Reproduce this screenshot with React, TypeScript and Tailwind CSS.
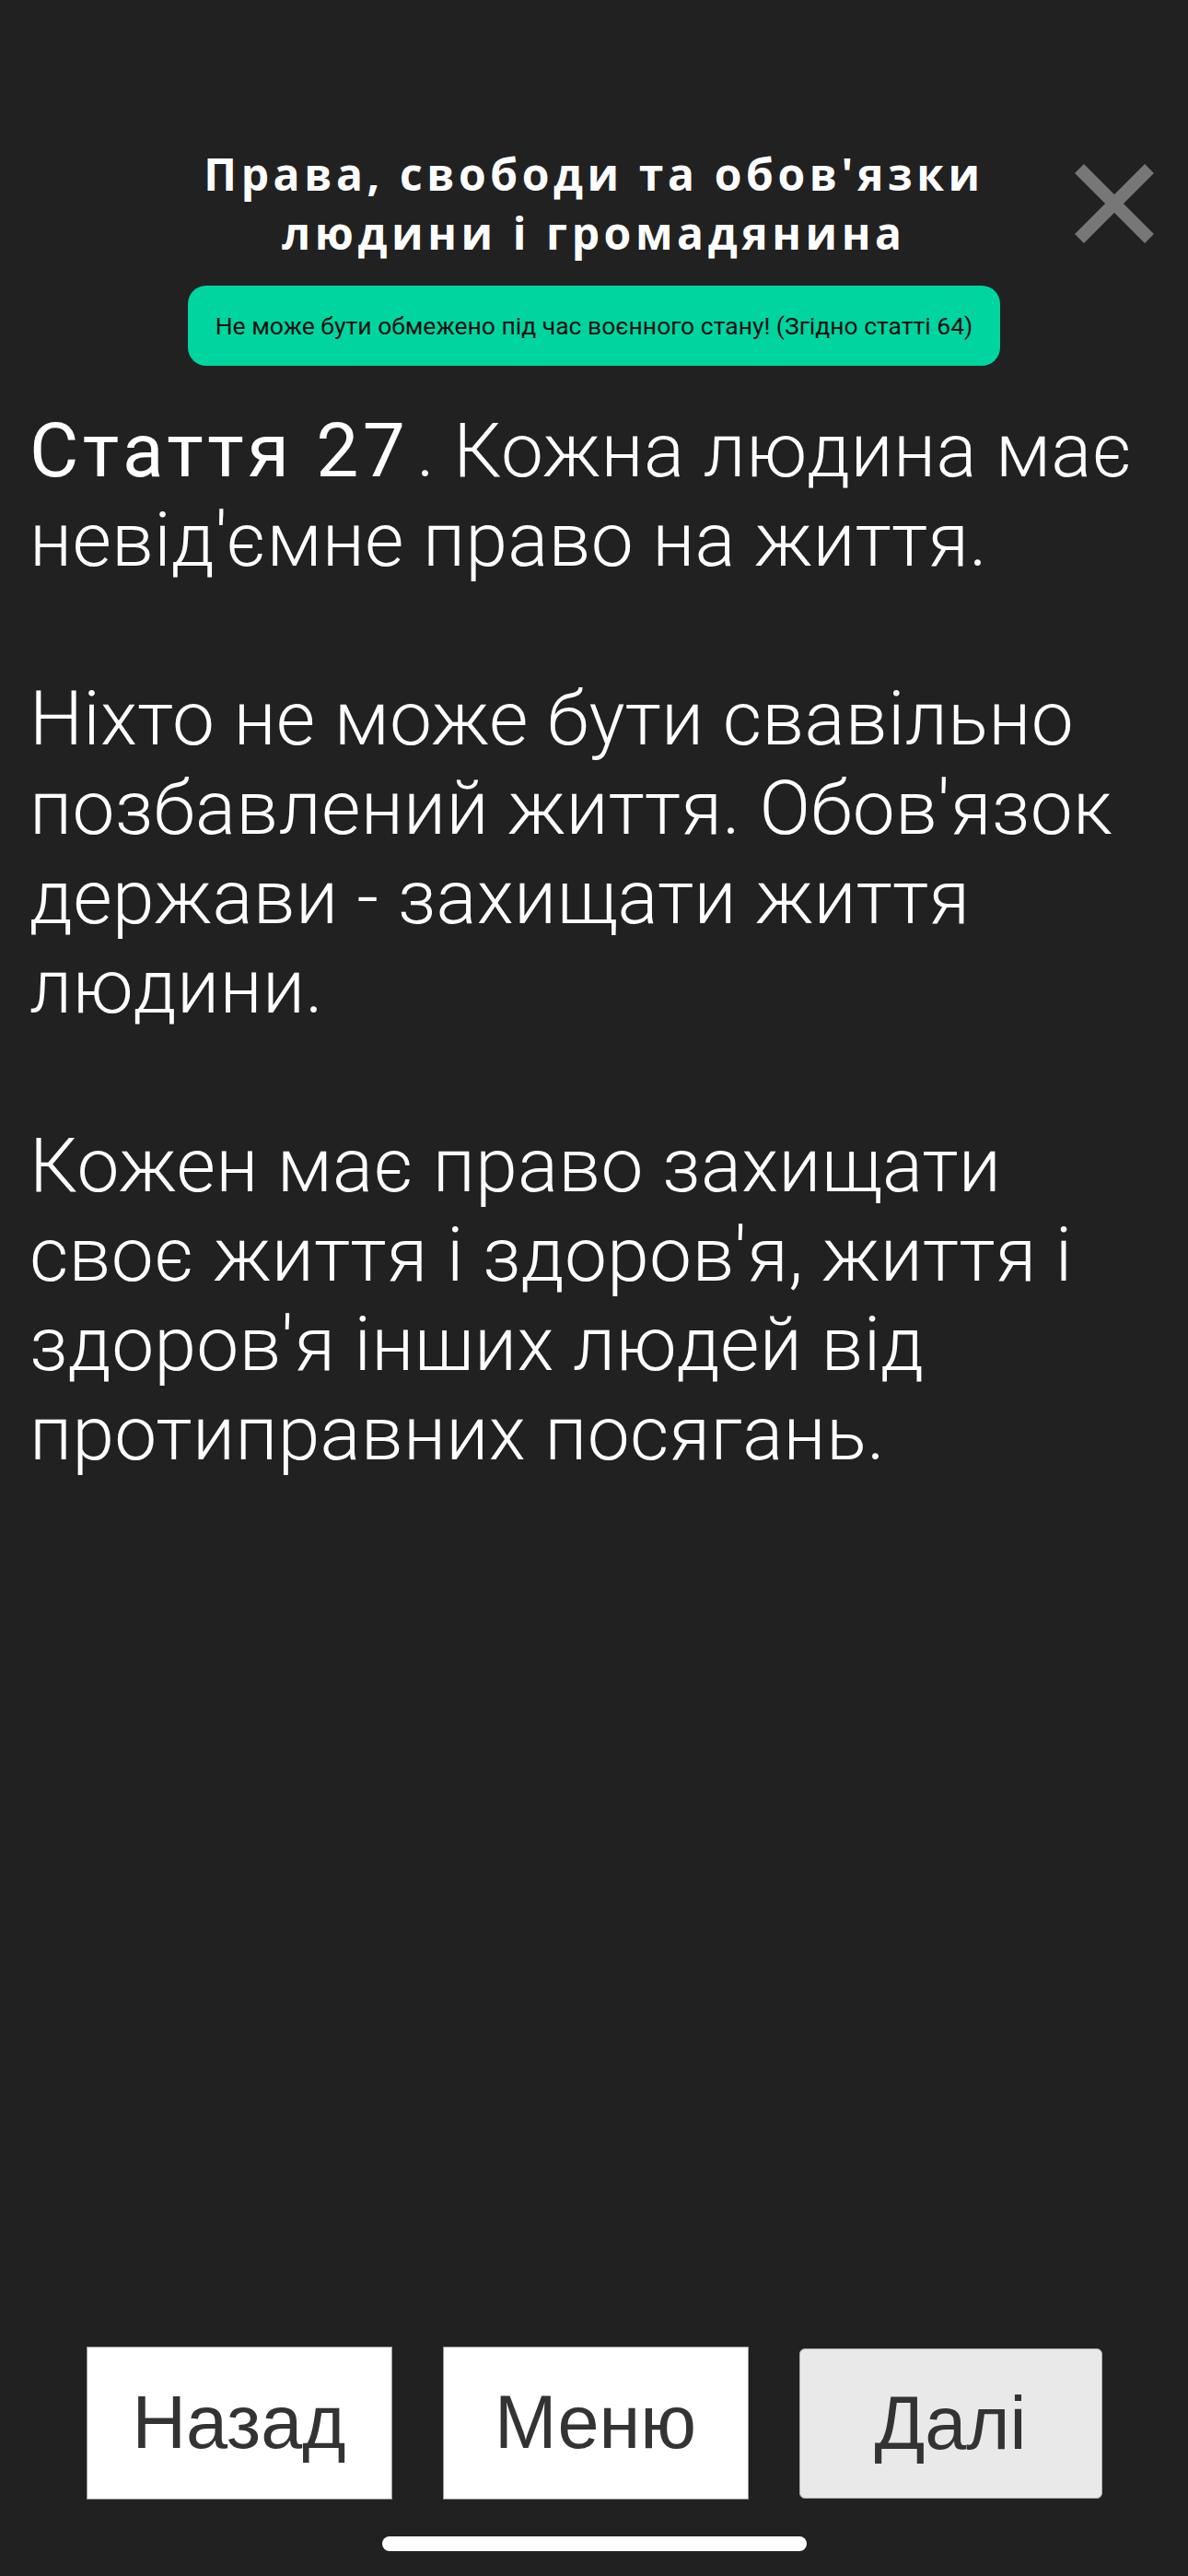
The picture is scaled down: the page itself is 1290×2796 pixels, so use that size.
import React from "react";

export default function App() {
  return (
    <div className="relative w-[1290px] h-[2796px] bg-[#212121] flex flex-col overflow-hidden">
      <header className="relative pt-[157px]">
        <h1
          className="text-center text-white font-bold text-[48px] leading-[64px] tracking-[4.6px]"
          style={{ fontFamily: '"Open Sans", "Noto Sans", sans-serif' }}
        >
          Права, свободи та обов'язки
          <br />
          людини і громадянина
        </h1>
        <button className="absolute left-[1167px] top-[178px] w-[86px] h-[86px]" aria-label="Закрити">
          <svg width="86" height="86" viewBox="0 0 86 86">
            <line x1="5" y1="5" x2="81" y2="81" stroke="#777777" strokeWidth="14" />
            <line x1="81" y1="5" x2="5" y2="81" stroke="#777777" strokeWidth="14" />
          </svg>
        </button>
      </header>

      <div className="mx-auto mt-[25px] w-[882px] h-[87px] rounded-[20px] bg-[#00d5a0] flex items-center justify-center">
        <span
          className="text-[26.5px] text-[#111111]"
          style={{ fontFamily: 'Roboto, "Noto Sans", sans-serif' }}
        >
          Не може бути обмежено під час воєнного стану! (Згідно статті 64)
        </span>
      </div>

      <div
        className="mt-[44px] px-[32px] text-white text-[82px] leading-[97px] whitespace-pre-line"
        style={{ fontFamily: 'Roboto, "Noto Sans", sans-serif' }}
      >
        <span className="font-normal tracking-[4.4px] mr-[8px]">Стаття 27</span>
        <span className="font-light tracking-[0.3px]">
          {". Кожна людина має невід'ємне право на життя.\n\nНіхто не може бути свавільно позбавлений життя. Обов'язок держави - захищати життя людини.\n\nКожен має право захищати своє життя і здоров'я, життя і здоров'я інших людей від протиправних посягань."}
        </span>
      </div>

      <div className="flex-1" />

      <div
        className="flex justify-center gap-[55px] text-[81px] text-[#333333]"
        style={{ fontFamily: '"Liberation Sans", Arial, sans-serif' }}
      >
        <button className="w-[332px] h-[166px] bg-white border border-[#9a9a9a] flex items-center justify-center">
          Назад
        </button>
        <button className="w-[332px] h-[166px] bg-white border border-[#9a9a9a] flex items-center justify-center">
          Меню
        </button>
        <button className="w-[329px] h-[163px] mt-[2px] bg-[#e9e9e9] border border-[#b0b0b0] rounded-[6px] flex items-center justify-center">
          Далі
        </button>
      </div>

      <div className="mt-[40px] mb-[27px] mx-auto w-[461px] h-[16px] rounded-full bg-white" />
    </div>
  );
}
